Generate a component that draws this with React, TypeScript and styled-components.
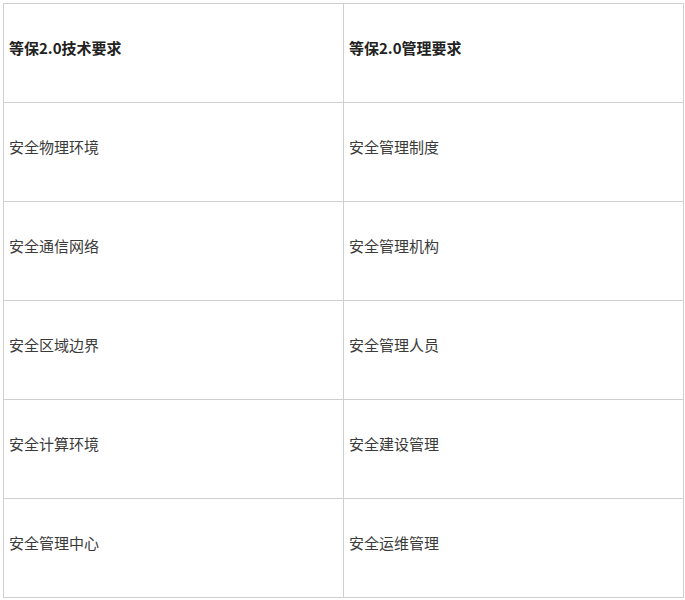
import React from "react";
import styled, { createGlobalStyle } from "styled-components";

const Global = createGlobalStyle`
  html, body { margin: 0; padding: 0; background: #fff; }
  body { font-family: "Noto Sans CJK SC", "Noto Sans", sans-serif; color: #333; }
`;

const Wrap = styled.div`
  padding: 3px;
`;

const Table = styled.table`
  width: 681px;
  border-collapse: collapse;
  table-layout: fixed;
`;

const Cell = styled.td<{ $head?: boolean }>`
  border: 1px solid #cfcfcf;
  height: 99px;
  box-sizing: border-box;
  padding: 0 5px 10px 5px;
  vertical-align: middle;
  font-size: 15px;
  line-height: 20px;
  font-weight: ${(p) => (p.$head ? 700 : 400)};
  color: ${(p) => (p.$head ? "#222" : "#3a3a3a")};
`;

const rows: [string, string][] = [
  ["安全物理环境", "安全管理制度"],
  ["安全通信网络", "安全管理机构"],
  ["安全区域边界", "安全管理人员"],
  ["安全计算环境", "安全建设管理"],
  ["安全管理中心", "安全运维管理"],
];

export default function App() {
  return (
    <>
      <Global />
      <Wrap>
        <Table>
          <tbody>
            <tr>
              <Cell $head>等保2.0技术要求</Cell>
              <Cell $head>等保2.0管理要求</Cell>
            </tr>
            {rows.map(([a, b]) => (
              <tr key={a}>
                <Cell>{a}</Cell>
                <Cell>{b}</Cell>
              </tr>
            ))}
          </tbody>
        </Table>
      </Wrap>
    </>
  );
}
